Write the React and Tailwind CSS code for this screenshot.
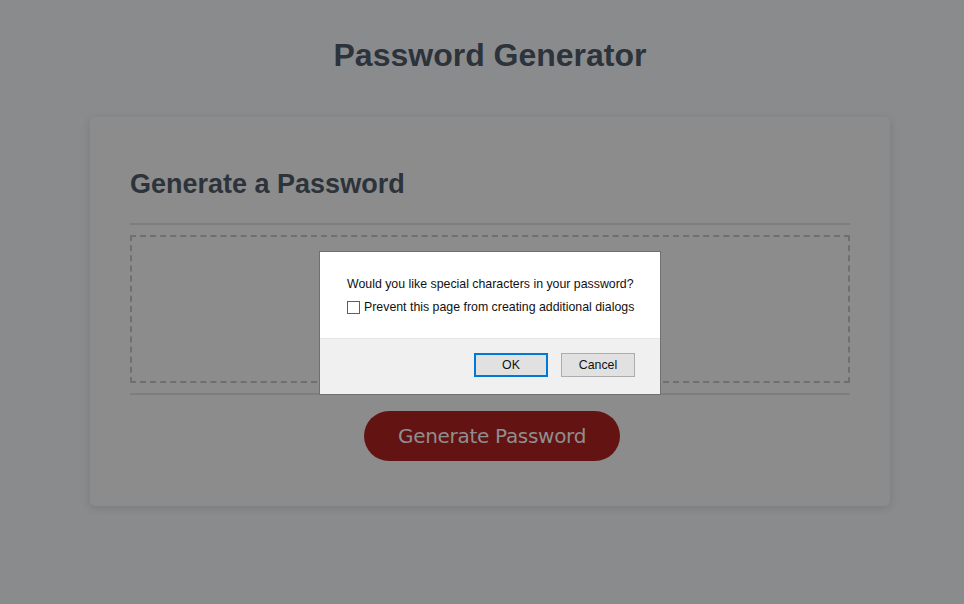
import React from "react";

const Dialog = () => {
  return (
    <div className="absolute left-[319px] top-[251px] w-[342px] h-[144px] border border-[#707070] bg-white flex flex-col font-['Liberation_Sans',Arial,sans-serif] text-[12.35px] text-[#111] whitespace-nowrap">
      <div className="flex-1 pl-[27px] pr-[10px] pt-[24px]">
        <p className="leading-[16px]">Would you like special characters in your password?</p>
        <div className="flex items-start mt-[7px] leading-[16px]">
          <div className="w-[13px] h-[13px] mt-[2px] p-[1px] bg-[#0078d7] mr-[4px] shrink-0">
            <div className="w-full h-full bg-white"></div>
          </div>
          <span>Prevent this page from creating additional dialogs</span>
        </div>
      </div>
      <div className="h-[56px] bg-[#f0f0f0] border-t border-[#e5e5e5] flex justify-end items-start pt-[14px] pr-[25px] gap-[13px]">
        <button className="w-[74px] h-[24px] bg-[#e1e1e1] border-2 border-[#0078d7] text-[12.35px] text-[#111]">OK</button>
        <button className="w-[74px] h-[24px] bg-[#e1e1e1] border border-[#adadad] text-[12.35px] text-[#111]">Cancel</button>
      </div>
    </div>
  );
};

const App = () => {
  return (
    <div className="relative min-h-[604px] bg-[#8a8b8d] font-['Liberation_Sans',Arial,sans-serif] overflow-hidden pl-[16px]">
      <header className="pt-[37px] text-center">
        <h1 className="text-[32px] leading-[37px] font-bold text-[#2c333b]">Password Generator</h1>
      </header>

      <div className="mx-auto mt-[43px] w-[800px] rounded-[5px] bg-[#8c8c8c] shadow-[0_2px_8px_rgba(0,0,0,0.12)] px-[40px] pt-[52px] pb-[45px]">
        <h2 className="text-[27px] leading-[31px] font-bold text-[#2c333b]">Generate a Password</h2>
        <div className="mt-[23px] h-[2px] bg-[#7e7e7f]"></div>
        <div className="mt-[10px] h-[148px] border-2 border-dashed border-[#6e6f73] rounded-[2px]"></div>
        <div className="mt-[10px] h-[2px] bg-[#7e7e7f]"></div>
        <div className="mt-[16px] flex justify-center pl-[4px]">
          <button className="w-[256px] h-[50px] rounded-full bg-[#641313] text-[#8f8f8f] text-[20px] font-['DejaVu_Sans',Verdana,sans-serif] tracking-[-0.3px]">
            Generate Password
          </button>
        </div>
      </div>

      <Dialog />
    </div>
  );
};

export default App;
